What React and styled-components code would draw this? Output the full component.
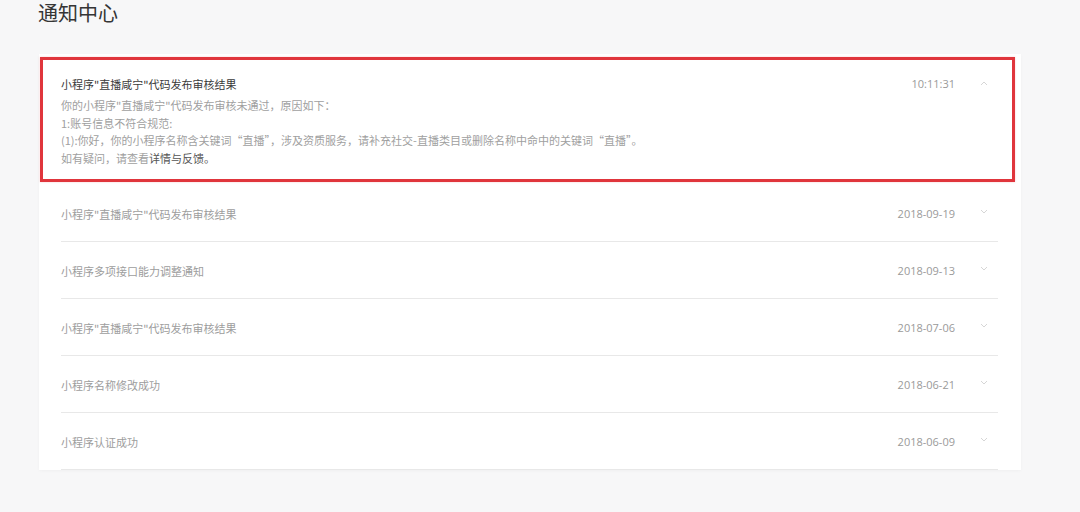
import React from "react";
import styled, { createGlobalStyle } from "styled-components";

const Global = createGlobalStyle`
  html, body { margin: 0; padding: 0; background: #f7f7f8; }
  body { font-family: "Open Sans", "Noto Sans CJK SC", sans-serif; }
`;

const Page = styled.div`
  padding: 2px 0 0 38px;
  width: 1080px;
  height: 512px;
  box-sizing: border-box;
`;

const Title = styled.h1`
  margin: 0;
  font-size: 20px;
  line-height: 22px;
  font-weight: 400;
  color: #353535;
  font-family: "Noto Sans CJK SC", sans-serif;
`;

const Card = styled.div`
  margin: 30px 0 0 1px;
  width: 982px;
  background: #fff;
  padding-top: 3px;
  box-shadow: 0 1px 3px rgba(0, 0, 0, 0.03);
`;

const Highlight = styled.div`
  margin: 0 6px 3px 1px;
  border: 3px solid #e0353c;
  padding: 15px 23px 11px 18px;
  box-shadow: 0 0 2px rgba(226, 58, 64, 0.25);
`;

const Head = styled.div`
  display: flex;
  align-items: center;
  line-height: 18px;
  font-size: 11px;
`;

const ItemTitle = styled.div`
  flex: 1;
  color: ${(p) => (p.$active ? "#3a3a3a" : "#9d9d9d")};
  font-family: "Noto Sans CJK SC", sans-serif;
`;

const Time = styled.div`
  color: #9a9a9a;
  font-family: "Open Sans", sans-serif;
  font-size: 11px;
`;

const Arrow = styled.div`
  width: 10px;
  margin-left: 24px;
  display: flex;
  justify-content: center;
  align-items: center;
  margin-top: ${(p) => (p.$up ? "-2px" : "-5px")};
`;

const Body = styled.div`
  margin-top: 4px;
  font-size: 11px;
  line-height: 17.7px;
  color: #a0a0a0;
  font-family: "Noto Sans CJK SC", sans-serif;
`;

const Link = styled.span`
  color: #555;
`;

const Row = styled.div`
  margin: 0 23px 0 22px;
  height: 57px;
  box-sizing: border-box;
  border-bottom: 1px solid #e8e8e8;
  display: flex;
  align-items: center;
  padding: 2px 9px 0 0;
  & > ${Head} { flex: 1; }
`;

const Caret = ({ up }) => (
  <svg width="8" height="5" viewBox="0 0 8 5">
    <path
      d={up ? "M1 4 L4 1 L7 4" : "M1 1 L4 4 L7 1"}
      fill="none"
      stroke="#d6d6d6"
      strokeWidth="1"
    />
  </svg>
);

const items = [
  { title: '小程序"直播咸宁"代码发布审核结果', date: "2018-09-19" },
  { title: "小程序多项接口能力调整通知", date: "2018-09-13" },
  { title: '小程序"直播咸宁"代码发布审核结果', date: "2018-07-06" },
  { title: "小程序名称修改成功", date: "2018-06-21" },
  { title: "小程序认证成功", date: "2018-06-09" },
];

export default function App() {
  return (
    <Page>
      <Global />
      <Title>通知中心</Title>
      <Card>
        <Highlight>
          <Head>
            <ItemTitle $active>小程序"直播咸宁"代码发布审核结果</ItemTitle>
            <Time>10:11:31</Time>
            <Arrow $up>
              <Caret up />
            </Arrow>
          </Head>
          <Body>
            <div>你的小程序"直播咸宁"代码发布审核未通过，原因如下：</div>
            <div>1:账号信息不符合规范:</div>
            <div>
              (1):你好，你的小程序名称含关键词“直播”，涉及资质服务，请补充社交-直播类目或删除名称中命中的关键词“直播”。
            </div>
            <div>
              如有疑问，请查看<Link>详情与反馈。</Link>
            </div>
          </Body>
        </Highlight>
        {items.map((it, i) => (
          <Row key={i}>
            <Head>
              <ItemTitle>{it.title}</ItemTitle>
              <Time>{it.date}</Time>
              <Arrow>
                <Caret />
              </Arrow>
            </Head>
          </Row>
        ))}
      </Card>
    </Page>
  );
}
